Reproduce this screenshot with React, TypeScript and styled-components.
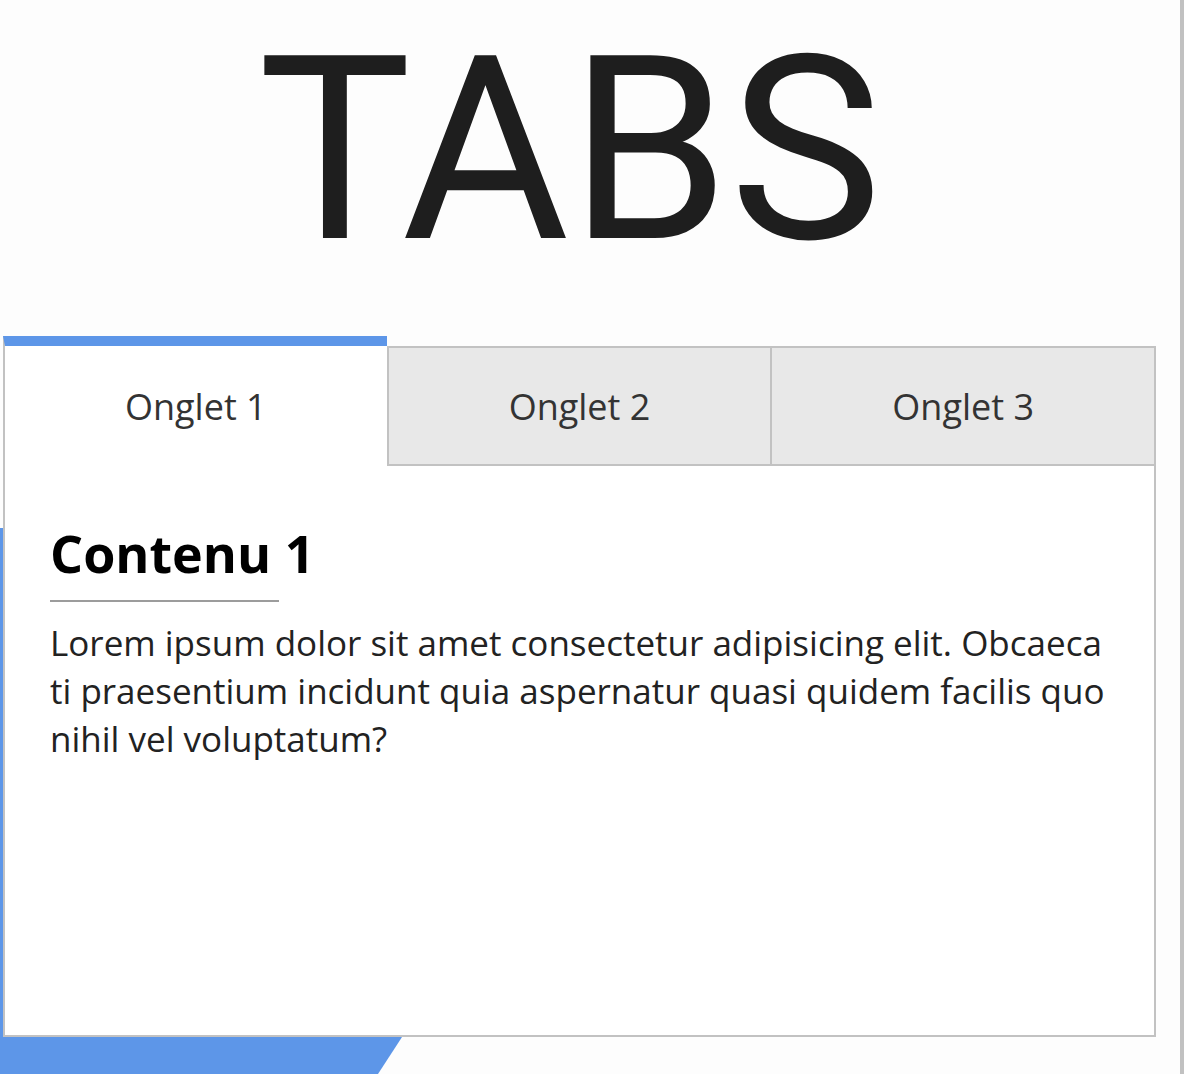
import React, { useState } from "react";
import styled, { createGlobalStyle } from "styled-components";

const GlobalStyle = createGlobalStyle`
  html, body { margin: 0; padding: 0; background: #ffffff; }
  * { box-sizing: border-box; }
`;

const BLUE = "#5d96e8";
const LINE = "#c2c2c2";

const Page = styled.div`
  position: relative;
  width: 1184px;
  min-height: 1074px;
  overflow: hidden;
  background: #fdfdfd;
  border-right: 4px solid #c1c1c1;
`;

const Decor = styled.div`
  position: absolute;
  inset: 0;
  background: ${BLUE};
  clip-path: polygon(0 528px, 733px 528px, 378px 1074px, 0 1074px);
  z-index: 0;
`;

const Title = styled.h1`
  position: relative;
  z-index: 1;
  margin: 0;
  padding-right: 40px;
  text-align: center;
  font-family: Roboto, "Liberation Sans", sans-serif;
  font-weight: 400;
  font-size: 257px;
  line-height: normal;
  color: #1e1e1e;
`;

const Tabs = styled.div`
  position: relative;
  z-index: 1;
  width: 1153px;
  margin: 35px 0 0 3px;
`;

const TabList = styled.div`
  display: flex;
  align-items: flex-end;
`;

const Tab = styled.button<{ $active: boolean; $last: boolean }>`
  flex: 1;
  display: flex;
  align-items: center;
  justify-content: center;
  height: ${(p) => (p.$active ? 130 : 120)}px;
  padding: 0;
  margin: 0;
  border: 2px solid ${LINE};
  border-right-width: ${(p) => (p.$last ? 2 : 0)}px;
  border-top: ${(p) => (p.$active ? `10px solid ${BLUE}` : `2px solid ${LINE}`)};
  border-bottom-width: ${(p) => (p.$active ? 0 : 2)}px;
  background: ${(p) => (p.$active ? "#ffffff" : "#e8e8e8")};
  font-family: "Open Sans", "Noto Sans", sans-serif;
  font-size: 36px;
  color: #333333;
  cursor: pointer;
`;

const Panel = styled.div`
  height: 571px;
  padding: 55px 44px 0 45px;
  background: #ffffff;
  border: 2px solid ${LINE};
  border-top: none;
`;

const Heading = styled.h2`
  margin: 0;
  font-family: "Open Sans", "Noto Sans", sans-serif;
  font-weight: 700;
  font-size: 52px;
  line-height: 64px;
  color: #000000;

  &::after {
    content: "";
    display: block;
    width: 229px;
    height: 2px;
    margin-top: 15px;
    background: #9c9c9c;
  }
`;

const Text = styled.p`
  margin: 17px 0 0;
  font-family: "Open Sans", "Noto Sans", sans-serif;
  font-size: 35px;
  line-height: 48px;
  color: #222222;
  word-break: break-all;
`;

const tabs = [
  {
    label: "Onglet 1",
    title: "Contenu 1",
    text: "Lorem ipsum dolor sit amet consectetur adipisicing elit. Obcaecati praesentium incidunt quia aspernatur quasi quidem facilis quo nihil vel voluptatum?",
  },
  {
    label: "Onglet 2",
    title: "Contenu 2",
    text: "Lorem ipsum dolor sit amet consectetur adipisicing elit. Obcaecati praesentium incidunt quia aspernatur quasi quidem facilis quo nihil vel voluptatum?",
  },
  {
    label: "Onglet 3",
    title: "Contenu 3",
    text: "Lorem ipsum dolor sit amet consectetur adipisicing elit. Obcaecati praesentium incidunt quia aspernatur quasi quidem facilis quo nihil vel voluptatum?",
  },
];

export default function App() {
  const [active, setActive] = useState(0);
  const cur = tabs[active];
  return (
    <Page>
      <GlobalStyle />
      <Decor />
      <Title>TABS</Title>
      <Tabs>
        <TabList>
          {tabs.map((t, i) => (
            <Tab
              key={t.label}
              $active={i === active}
              $last={i === tabs.length - 1}
              onClick={() => setActive(i)}
            >
              {t.label}
            </Tab>
          ))}
        </TabList>
        <Panel>
          <Heading>{cur.title}</Heading>
          <Text>{cur.text}</Text>
        </Panel>
      </Tabs>
    </Page>
  );
}
